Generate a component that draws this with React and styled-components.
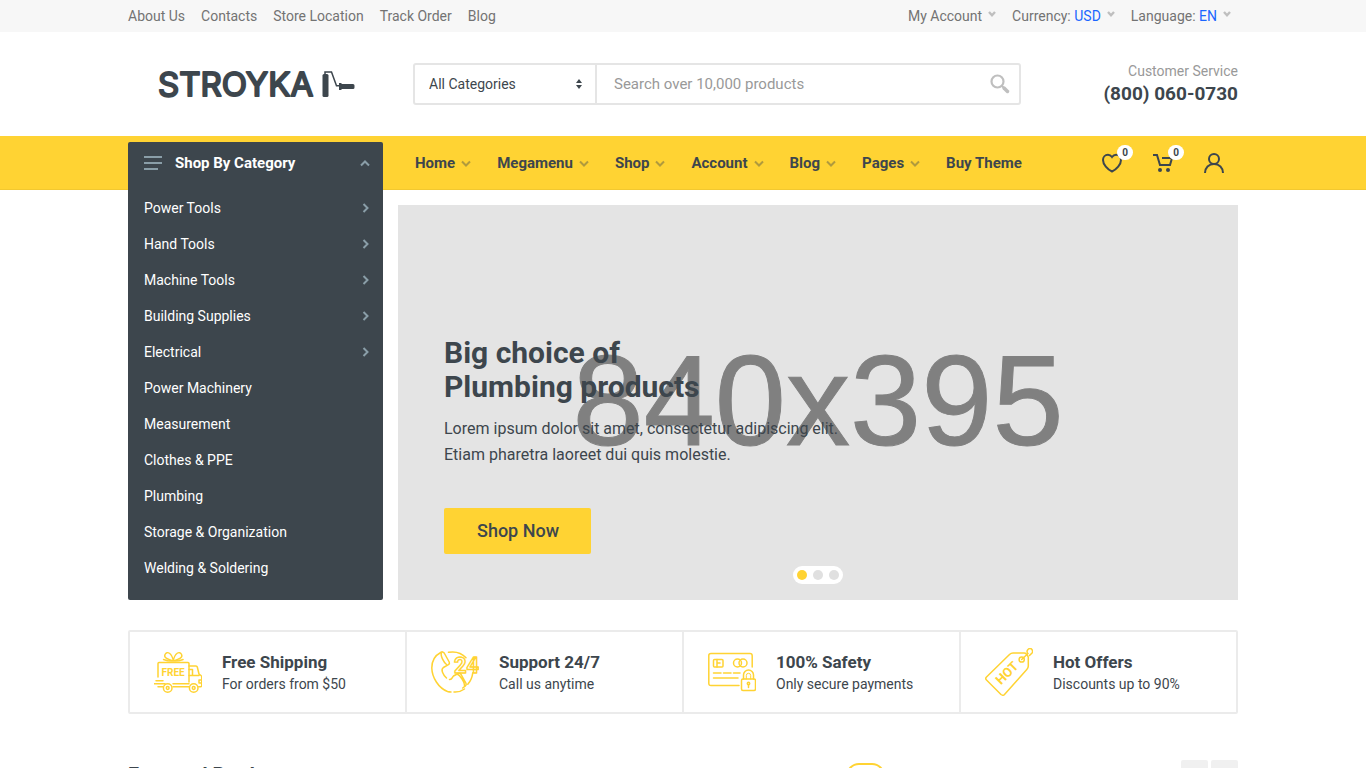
import React from "react";
import styled, { createGlobalStyle } from "styled-components";

const GlobalStyle = createGlobalStyle`
  * {
    box-sizing: border-box;
  }

  body {
    margin: 0;
    background: #fff;
    color: #3d464d;
    font-family: Roboto, "Liberation Sans", sans-serif;
    font-size: 16px;
    line-height: 24px;
  }

  button, input, select {
    font-family: inherit;
  }

  a {
    color: inherit;
    text-decoration: none;
  }

  ul {
    list-style: none;
    margin: 0;
    padding: 0;
  }
`;

const Container = styled.div`
  max-width: 1110px;
  width: 100%;
  margin: 0 auto;
`;

// Top bar
const Topbar = styled.div`
  background: #f7f7f7;
  color: #737373;
  font-size: 14px;
  line-height: 32px;
`;

const TopbarRow = styled(Container)`
  display: flex;
  justify-content: space-between;
`;

const TopbarGroup = styled.div`
  display: flex;
  gap: 16px;
`;

const TopbarButton = styled.button`
  display: flex;
  align-items: center;
  gap: 6px;
  height: 32px;
  padding: 0;
  border: 0;
  background: none;
  color: inherit;
  font-size: 14px;
  cursor: pointer;

  svg {
    color: #bfbfbf;
    margin-bottom: 4px;
  }
`;

const TopbarMenus = styled(TopbarGroup)`
  padding-right: 7px;
`;

const TopbarValue = styled.span`
  color: #1a66ff;
`;

// Header
const HeaderRow = styled(Container)`
  display: grid;
  grid-template-columns: 255px 1fr 187px;
  align-items: center;
  height: 104px;
`;

const Logo = styled.a`
  display: flex;
  align-items: center;
  justify-content: center;
`;

const SearchForm = styled.form`
  display: flex;
  height: 42px;
  margin: 0 30px;
  border: 2px solid #e5e5e5;
  border-radius: 3px;
`;

const CategoryField = styled.div`
  display: flex;
  align-items: center;
  width: 182px;
  padding-right: 13px;
  border-right: 2px solid #e5e5e5;
`;

const CategorySelect = styled.select`
  flex: 1;
  height: 100%;
  padding: 0 14px;
  border: 0;
  background: none;
  appearance: none;
  color: #3d464d;
  font-size: 14px;
`;

const SearchInput = styled.input`
  flex: 1;
  min-width: 0;
  padding: 0 17px;
  border: 0;
  background: none;
  font-size: 15px;

  &::placeholder {
    color: #999;
    opacity: 1;
  }
`;

const SearchButton = styled.button`
  display: flex;
  align-items: center;
  justify-content: center;
  width: 38px;
  padding: 0;
  border: 0;
  background: none;
  color: #bfbfbf;
`;

const Phone = styled.div`
  text-align: right;
`;

const PhoneTitle = styled.div`
  color: #999;
  font-size: 14px;
  line-height: 20px;
`;

const PhoneNumber = styled.div`
  font-size: 19px;
  font-weight: 700;
  line-height: 26px;
`;

// Navigation panel
const NavPanel = styled.div`
  background: #ffd333;
  box-shadow: inset 0 -1px #f2c830;
`;

const NavRow = styled(Container)`
  display: flex;
  align-items: center;
  height: 54px;
`;

const DepartmentsSlot = styled.div`
  position: relative;
  align-self: stretch;
  width: 255px;
`;

const Departments = styled.div`
  position: absolute;
  top: 6px;
  left: 0;
  z-index: 2;
  width: 100%;
  padding-bottom: 14px;
  border-radius: 2px;
  background: #3d464d;
  color: #fff;
`;

const DepartmentsButton = styled.button`
  display: flex;
  align-items: center;
  gap: 13px;
  width: 100%;
  height: 42px;
  margin-bottom: 6px;
  padding: 0 13px 0 16px;
  border: 0;
  background: none;
  color: #fff;
  font-size: 15px;
  font-weight: 700;

  svg {
    color: #8a9ea8;
  }

  svg:last-child {
    margin-left: auto;
  }
`;

const DepartmentLink = styled.a`
  display: flex;
  align-items: center;
  justify-content: space-between;
  padding: 6px 14px 6px 16px;
  font-size: 14px;
  line-height: 24px;

  svg {
    color: #8a9ea8;
  }
`;

const NavLinks = styled.ul`
  display: flex;
  flex: 1;
  padding-left: 19px;
`;

const NavLink = styled.a`
  display: flex;
  align-items: center;
  gap: 6px;
  padding: 0 13px;
  font-size: 15px;
  font-weight: 700;

  svg {
    opacity: 0.4;
  }
`;

const Indicators = styled.div`
  display: flex;
  gap: 3px;
`;

const Indicator = styled.a`
  position: relative;
  display: flex;
  align-items: center;
  justify-content: center;
  width: 48px;
  height: 54px;
`;

const Badge = styled.span`
  position: absolute;
  top: 9px;
  right: 3px;
  height: 15px;
  padding: 0 5px;
  border-radius: 8px;
  background: #fff;
  font-size: 10px;
  font-weight: 700;
  line-height: 15px;
`;

// Slideshow
const SlideRow = styled(Container)`
  padding: 15px 0 0 270px;
`;

const Slide = styled.section`
  position: relative;
  height: 395px;
  padding: 131px 46px 0;
  background: #e4e4e4;
`;

const SlideImage = styled.div`
  position: absolute;
  inset: 0;
  display: flex;
  align-items: center;
  justify-content: center;
  padding-bottom: 4px;
  color: #808080;
  font-family: "Liberation Sans", Arial, sans-serif;
  font-size: 128px;
  line-height: 1;
  -webkit-text-stroke: 1px #808080;
`;

const SlideContent = styled.div`
  position: relative;
`;

const SlideTitle = styled.h1`
  margin: 0 0 12px;
  font-size: 30px;
  font-weight: 700;
  line-height: 34px;
`;

const SlideText = styled.p`
  margin: 0 0 40px;
  font-size: 16px;
  line-height: 26px;
`;

const SlideButton = styled.button`
  height: 46px;
  padding: 0 32px 1px 33px;
  border: 0;
  border-radius: 2px;
  background: #ffd333;
  color: #3d464d;
  font-size: 18px;
  font-weight: 500;
`;

const Dots = styled.div`
  position: absolute;
  bottom: 16px;
  left: 50%;
  display: flex;
  gap: 6px;
  padding: 4px;
  border-radius: 9px;
  background: #fff;
  transform: translateX(-50%);
`;

const Dot = styled.button`
  width: 10px;
  height: 10px;
  padding: 0;
  border: 0;
  border-radius: 5px;
  background: ${({ $active }) => ($active ? "#ffd333" : "#e0e0e0")};
`;

// Features, the dividers are the background showing through the gap
const Features = styled(Container)`
  display: grid;
  grid-template-columns: repeat(4, 1fr);
  gap: 2px;
  margin-top: 30px;
  border: 2px solid #ebebeb;
  border-radius: 2px;
  background: #ebebeb;
`;

const Feature = styled.div`
  display: flex;
  align-items: center;
  gap: 20px;
  height: 80px;
  padding: 0 24px;
  background: #fff;

  svg {
    flex: none;
    color: #ffd333;
  }
`;

const FeatureBody = styled.div`
  padding-top: 2px;
`;

const FeatureTitle = styled.div`
  font-size: 17px;
  font-weight: 700;
  line-height: 22px;
`;

const FeatureSubtitle = styled.div`
  font-size: 14px;
  line-height: 22px;
`;

// Products block
const ProductsHeader = styled(Container)`
  display: flex;
  align-items: center;
  margin-top: 46px;
  height: 32px;
`;

const ProductsTitle = styled.h2`
  flex: 1;
  margin: 0;
  padding-bottom: 2px;
  font-size: 20px;
  font-weight: 700;
  line-height: 24px;
`;

const Tabs = styled.div`
  display: flex;
  gap: 4px;
  margin-right: 11px;
`;

const Tab = styled.button`
  height: 26px;
  padding: 0 9px;
  border: 2px solid ${({ $active }) => ($active ? "#ffd333" : "transparent")};
  border-radius: 13px;
  background: none;
  color: #3d464d;
  font-size: 14px;
  font-weight: 500;
`;

const Arrows = styled.div`
  display: flex;
  gap: 3px;
  align-self: flex-start;
`;

const ArrowButton = styled.button`
  display: flex;
  align-items: center;
  justify-content: center;
  width: 27px;
  height: 25px;
  padding: 0;
  border: 0;
  border-radius: 2px;
  background: #f0f0f0;
  color: #b3b3b3;
`;

const chevrons = {
  down: "M1 1.5 5 5.5 9 1.5",
  up: "M1 5.5 5 1.5 9 5.5",
};

const Chevron = ({ dir = "down" }) => (
  <svg width="10" height="7" viewBox="0 0 10 7" fill="none" stroke="currentColor" strokeWidth="2">
    <path d={chevrons[dir]} />
  </svg>
);

const ChevronSmall = () => (
  <svg width="8" height="6" viewBox="0 0 8 6" fill="none" stroke="currentColor" strokeWidth="2.400">
    <path d="M1 1 4 4.200 7 1" />
  </svg>
);

const ChevronSide = ({ left }) => (
  <svg width="7" height="10" viewBox="0 0 7 10" fill="none" stroke="currentColor" strokeWidth="2">
    <path d={left ? "M5.5 1 1.5 5 5.5 9" : "M1.5 1 5.5 5 1.5 9"} />
  </svg>
);

const LogoMark = () => (
  <svg width="198" height="44" viewBox="0 0 198 44" fill="#3d464d">
    <text
      x="1"
      y="34"
      fontFamily="Inter, sans-serif"
      fontSize="33"
      fontWeight="400"
      stroke="#3d464d"
      strokeWidth="2"
      strokeLinejoin="round"
    >
      STROYKA
    </text>
    <rect x="165.500" y="12" width="6" height="23" rx="1.500" />
    <path d="M168 13V10h6.500l5 13.800h3" fill="none" stroke="#3d464d" strokeWidth="1.500" />
    <path d="M182 21h2.500v1H196a1.500 1.500 0 0 1 1.500 1.500v2a1.500 1.500 0 0 1-1.500 1.500h-11.500v1H182z" />
  </svg>
);

const SortIcon = () => (
  <svg width="6" height="10" viewBox="0 0 6 10" fill="#3d464d">
    <path d="M0 4 3 0 6 4zM0 6h6L3 10z" />
  </svg>
);

const SearchIcon = () => (
  <svg width="20" height="20" viewBox="0 0 20 20" fill="none" stroke="currentColor">
    <circle cx="7.500" cy="7.500" r="6" strokeWidth="2.200" />
    <path d="M12 12l1.500 1.500" strokeWidth="2" />
    <path d="M14 14l3.500 3.500" strokeWidth="3.500" strokeLinecap="round" />
  </svg>
);

const MenuIcon = () => (
  <svg width="18" height="14" viewBox="0 0 18 14" fill="currentColor">
    <path d="M0 0h18v2H0zM0 6h18v2H0zM0 12h14v2H0z" />
  </svg>
);

const HeartIcon = () => (
  <svg width="20" height="20" viewBox="0 0 20 20" fill="none" stroke="currentColor" strokeWidth="2">
    <path d="M10 4C8.700 2.300 7.300 1.800 6 1.800 3 1.800 1 4.200 1 7c0 4.500 4.500 9.500 9 11.500 4.500-2 9-7 9-11.500 0-2.800-2-5.200-5-5.200-1.300 0-2.700.5-4 2.200z" />
  </svg>
);

const CartIcon = () => (
  <svg width="20" height="20" viewBox="0 0 20 20" fill="none" stroke="currentColor" strokeWidth="2">
    <path d="M0 2h4l3 10h10L19 5H9" />
    <circle cx="7" cy="17" r="2" fill="currentColor" stroke="none" />
    <circle cx="15" cy="17" r="2" fill="currentColor" stroke="none" />
  </svg>
);

const UserIcon = () => (
  <svg width="20" height="20" viewBox="0 0 20 20" fill="none" stroke="currentColor" strokeWidth="2">
    <circle cx="10" cy="6" r="5" />
    <path d="M1 20c0-5.500 3.800-9 9-9s9 3.500 9 9" />
  </svg>
);

const FeatureSvg = ({ children }) => (
  <svg
    width="48"
    height="48"
    viewBox="0 0 48 48"
    fill="none"
    stroke="currentColor"
    strokeWidth="1.500"
    strokeLinecap="round"
    strokeLinejoin="round"
  >
    {children}
  </svg>
);

const FreeShippingIcon = () => (
  <FeatureSvg>
    <path d="M4 29V15.500q0-1 1-1h29q1 0 1 1V34M4 38.700h5M19 38.700h16M19 35.700h16M2 32.700h7M0 35.700h11" />
    <path d="M35 18h7q1 0 1.300 1l1.700 7 2 1.500q.7.500.7 1.500v8.700q0 1-1 1h-2M35 21.500h3.500v6H45M35 27.500h4M47.500 32h-2.500v3h2.500" />
    <circle cx="13.700" cy="40" r="4.300" />
    <circle cx="13.700" cy="40" r="1.400" />
    <circle cx="39.700" cy="40" r="4.300" />
    <circle cx="39.700" cy="40" r="1.400" />
    <path
      d="M19.300 13C13 11 9.500 9.500 11 6.500c2-4 7-1.500 8.300 6.500C20.600 5 25.600 2.500 27.600 6.500 29 9.500 25.600 11 19.300 13zM9.500 11.500q5 2 9.800 1.500 4.800.5 9.800-1.500"
      strokeWidth="1.400"
    />
    <text x="7.500" y="28" fontFamily="Roboto, sans-serif" fontSize="10" fontWeight="700" fill="currentColor" stroke="none">
      FREE
    </text>
  </FeatureSvg>
);

const SupportIcon = () => (
  <FeatureSvg>
    <path d="M17.500 4.300c7-1.200 13.500 1 17.500 5.500M41.800 24.700c-.5 4.500-2.200 8.500-5 11.600" />
    <path d="M9.700 4.500C3 8 .8 13.500.8 20c.2 9.500 6.700 20 15.700 23.500 1.200.4 2.300.5 3.500.5M23 44c4 .3 7.500-.8 10.500-3" />
    <path d="M9.700 4.500q2-1.500 3.500.5l5 9q.8 1.700-.8 2.700l-5 2.800c-3 2-.5 7 3.100 10.500M10.500 4.500c-1.500 3 2.500 10.500 5.500 12.500" />
    <path d="M18.500 31.500c2.500.5 2.500-2 4-3.500l4.500-2.500q2-.8 3 .8l5 9q.8 1.700-.8 2.800l-2.500 1.900M26 26c3 1 8 8.500 7.500 12.500" />
    <text x="23" y="25" fontFamily="Roboto, sans-serif" fontSize="22" fontWeight="700" strokeWidth="1.400">
      24
    </text>
  </FeatureSvg>
);

const SafetyIcon = () => (
  <FeatureSvg>
    <path d="M31 37.500H3q-2.200 0-2.200-2.200V7.500Q.8 5.500 3 5.500h39q2.200 0 2.200 2.200V19" />
    <rect x="5.500" y="11.500" width="9.500" height="7.500" rx="1" />
    <path d="M9 11.500V19M9 15h3" />
    <circle cx="29.500" cy="15" r="4" />
    <circle cx="35" cy="15" r="4" />
    <path d="M5.500 25h7.500M15.500 25h7.500M25.500 25h6.500M5.500 30h24.500" />
    <rect x="33.500" y="31" width="14" height="11.500" rx="1.500" />
    <path d="M35.500 31v-4a5 5 0 0 1 10 0v4" />
    <path d="M38.300 31v-3.500a2.200 2.200 0 0 1 4.400 0V31" strokeWidth="1" />
    <circle cx="40.500" cy="35.500" r="1.200" />
    <path d="M40.500 37v2.500" />
  </FeatureSvg>
);

const HotIcon = () => (
  <FeatureSvg>
    <path d="M1.500 29 24.500 6.500q1.500-1.500 3.500-1.500h11q1.500 0 2.500 1.200t1.800 2.800v9q0 2-1.500 3.500L19.500 46.500q-1.500 1.500-3.500 0L1.500 32q-1.500-1.500 0-3z" />
    <circle cx="36.700" cy="11.500" r="2.600" />
    <path d="M36.700 11.500 43 5.500c-2-1.500-.5-4.500 1.500-5s3.700 2 2.800 4.200L44.500 7.500" />
    <text
      x="22"
      y="29.500"
      fontFamily="Roboto, sans-serif"
      fontSize="13"
      fontWeight="700"
      textAnchor="middle"
      fill="currentColor"
      stroke="none"
      transform="rotate(-45 22 25)"
    >
      HOT
    </text>
  </FeatureSvg>
);

const topLinks = ["About Us", "Contacts", "Store Location", "Track Order", "Blog"];

const navLinks = ["Home", "Megamenu", "Shop", "Account", "Blog", "Pages", "Buy Theme"];

const departments = [
  { label: "Power Tools", nested: true },
  { label: "Hand Tools", nested: true },
  { label: "Machine Tools", nested: true },
  { label: "Building Supplies", nested: true },
  { label: "Electrical", nested: true },
  { label: "Power Machinery" },
  { label: "Measurement" },
  { label: "Clothes & PPE" },
  { label: "Plumbing" },
  { label: "Storage & Organization" },
  { label: "Welding & Soldering" },
];

const features = [
  { title: "Free Shipping", text: "For orders from $50", Icon: FreeShippingIcon },
  { title: "Support 24/7", text: "Call us anytime", Icon: SupportIcon },
  { title: "100% Safety", text: "Only secure payments", Icon: SafetyIcon },
  { title: "Hot Offers", text: "Discounts up to 90%", Icon: HotIcon },
];

const tabs = ["All", "Power Tools", "Hand Tools", "Plumbing"];

const App = () => {
  return (
    <>
      <GlobalStyle />
      <Topbar>
        <TopbarRow>
          <TopbarGroup>
            {topLinks.map((label) => (
              <a href="#" key={label}>{label}</a>
            ))}
          </TopbarGroup>
          <TopbarMenus>
            <TopbarButton>My Account <ChevronSmall /></TopbarButton>
            <TopbarButton>
              <span>Currency: <TopbarValue>USD</TopbarValue></span>
              <ChevronSmall />
            </TopbarButton>
            <TopbarButton>
              <span>Language: <TopbarValue>EN</TopbarValue></span>
              <ChevronSmall />
            </TopbarButton>
          </TopbarMenus>
        </TopbarRow>
      </Topbar>

      <header>
        <HeaderRow>
          <Logo href="#" aria-label="Stroyka"><LogoMark /></Logo>
          <SearchForm>
            <CategoryField>
              <CategorySelect aria-label="Category">
                <option>All Categories</option>
              </CategorySelect>
              <SortIcon />
            </CategoryField>
            <SearchInput type="text" aria-label="Search" placeholder="Search over 10,000 products" />
            <SearchButton type="submit" aria-label="Search"><SearchIcon /></SearchButton>
          </SearchForm>
          <Phone>
            <PhoneTitle>Customer Service</PhoneTitle>
            <PhoneNumber>(800) 060-0730</PhoneNumber>
          </Phone>
        </HeaderRow>

        <NavPanel>
          <NavRow>
            <DepartmentsSlot>
              <Departments>
                <DepartmentsButton>
                  <MenuIcon />
                  Shop By Category
                  <Chevron dir="up" />
                </DepartmentsButton>
                <ul>
                  {departments.map(({ label, nested }) => (
                    <li key={label}>
                      <DepartmentLink href="#">
                        {label}
                        {nested && <ChevronSide />}
                      </DepartmentLink>
                    </li>
                  ))}
                </ul>
              </Departments>
            </DepartmentsSlot>
            <NavLinks>
              {navLinks.map((label) => (
                <li key={label}>
                  <NavLink href="#">
                    {label}
                    {label !== "Buy Theme" && <Chevron />}
                  </NavLink>
                </li>
              ))}
            </NavLinks>
            <Indicators>
              <Indicator href="#" aria-label="Wishlist"><HeartIcon /><Badge>0</Badge></Indicator>
              <Indicator href="#" aria-label="Cart"><CartIcon /><Badge>0</Badge></Indicator>
              <Indicator href="#" aria-label="Account"><UserIcon /></Indicator>
            </Indicators>
          </NavRow>
        </NavPanel>
      </header>

      <main>
        <SlideRow>
          <Slide>
            <SlideImage>840x395</SlideImage>
            <SlideContent>
              <SlideTitle>Big choice of<br />Plumbing products</SlideTitle>
              <SlideText>
                Lorem ipsum dolor sit amet, consectetur adipiscing elit.<br />
                Etiam pharetra laoreet dui quis molestie.
              </SlideText>
              <SlideButton>Shop Now</SlideButton>
            </SlideContent>
            <Dots>
              <Dot $active aria-label="Slide 1" />
              <Dot aria-label="Slide 2" />
              <Dot aria-label="Slide 3" />
            </Dots>
          </Slide>
        </SlideRow>

        <Features>
          {features.map(({ title, text, Icon }) => (
            <Feature key={title}>
              <Icon />
              <FeatureBody>
                <FeatureTitle>{title}</FeatureTitle>
                <FeatureSubtitle>{text}</FeatureSubtitle>
              </FeatureBody>
            </Feature>
          ))}
        </Features>

        <ProductsHeader>
          <ProductsTitle>Featured Products</ProductsTitle>
          <Tabs>
            {tabs.map((label, i) => (
              <Tab key={label} $active={i === 0}>{label}</Tab>
            ))}
          </Tabs>
          <Arrows>
            <ArrowButton aria-label="Previous"><ChevronSide left /></ArrowButton>
            <ArrowButton aria-label="Next"><ChevronSide /></ArrowButton>
          </Arrows>
        </ProductsHeader>
      </main>
    </>
  );
};

export default App;
